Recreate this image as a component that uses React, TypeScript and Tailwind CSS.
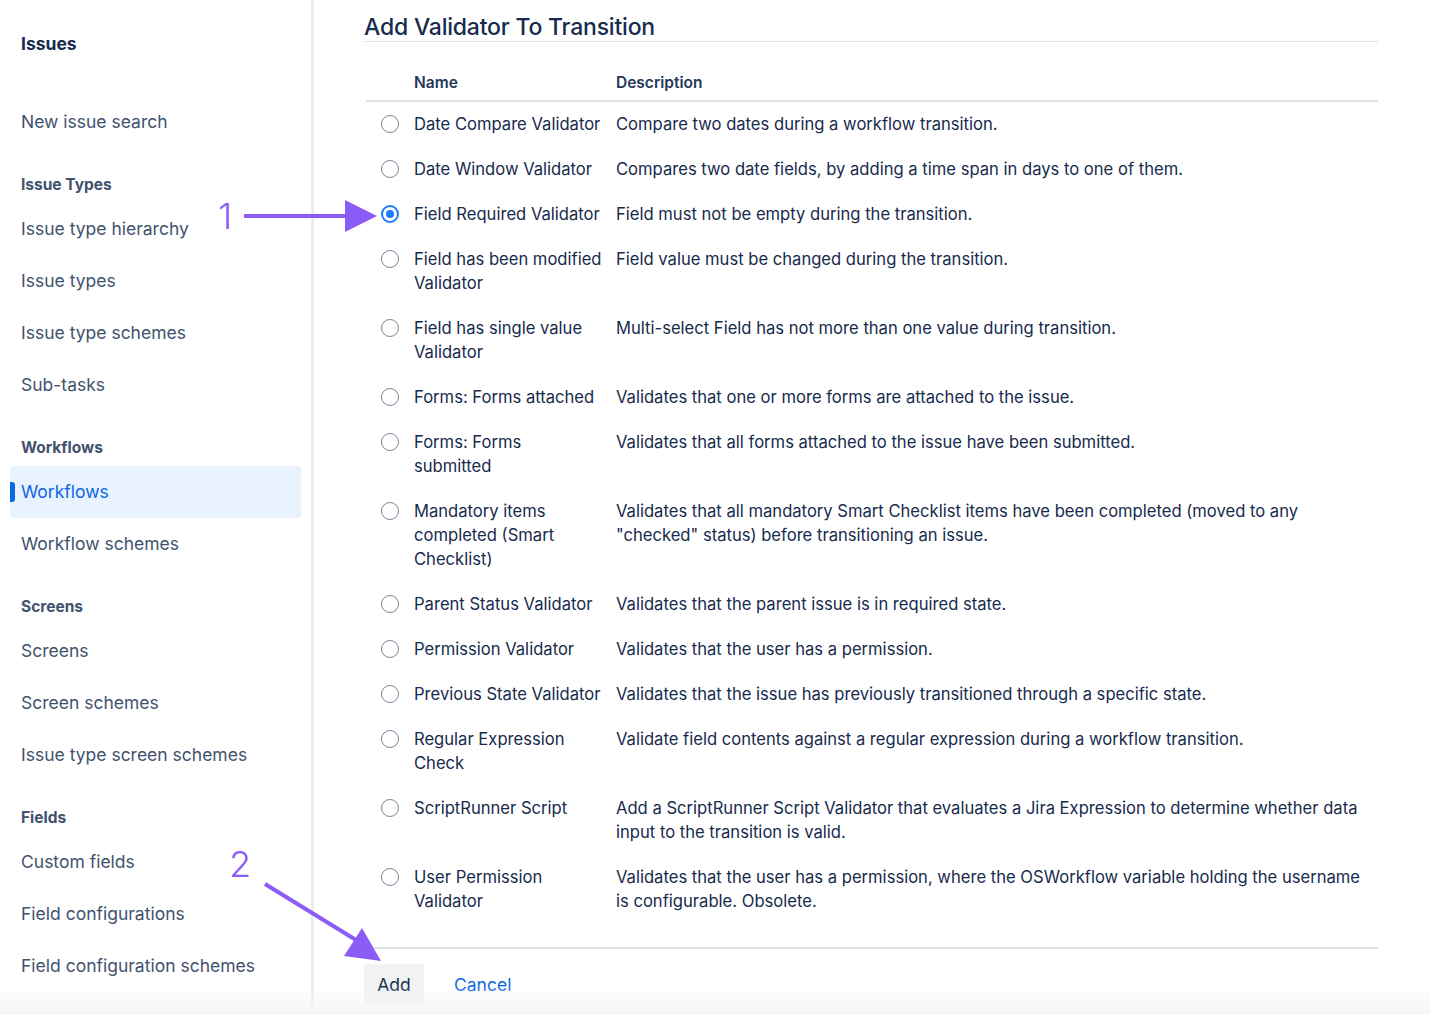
import { Fragment } from "react";

const FONT = "font-['Inter','Noto_Sans',sans-serif]";

type NavItem = { label: string; active?: boolean };
type NavGroup = { title: string; items: NavItem[] };

const NAV: NavGroup[] = [
  {
    title: "Issue Types",
    items: [
      { label: "Issue type hierarchy" },
      { label: "Issue types" },
      { label: "Issue type schemes" },
      { label: "Sub-tasks" },
    ],
  },
  {
    title: "Workflows",
    items: [{ label: "Workflows", active: true }, { label: "Workflow schemes" }],
  },
  {
    title: "Screens",
    items: [
      { label: "Screens" },
      { label: "Screen schemes" },
      { label: "Issue type screen schemes" },
    ],
  },
  {
    title: "Fields",
    items: [
      { label: "Custom fields" },
      { label: "Field configurations" },
      { label: "Field configuration schemes" },
    ],
  },
];

type Validator = { name: string[]; desc: string[]; checked?: boolean };

const VALIDATORS: Validator[] = [
  { name: ["Date Compare Validator"], desc: ["Compare two dates during a workflow transition."] },
  {
    name: ["Date Window Validator"],
    desc: ["Compares two date fields, by adding a time span in days to one of them."],
  },
  {
    name: ["Field Required Validator"],
    desc: ["Field must not be empty during the transition."],
    checked: true,
  },
  {
    name: ["Field has been modified", "Validator"],
    desc: ["Field value must be changed during the transition."],
  },
  {
    name: ["Field has single value", "Validator"],
    desc: ["Multi-select Field has not more than one value during transition."],
  },
  {
    name: ["Forms: Forms attached"],
    desc: ["Validates that one or more forms are attached to the issue."],
  },
  {
    name: ["Forms: Forms", "submitted"],
    desc: ["Validates that all forms attached to the issue have been submitted."],
  },
  {
    name: ["Mandatory items", "completed (Smart", "Checklist)"],
    desc: [
      "Validates that all mandatory Smart Checklist items have been completed (moved to any",
      "\"checked\" status) before transitioning an issue.",
    ],
  },
  {
    name: ["Parent Status Validator"],
    desc: ["Validates that the parent issue is in required state."],
  },
  { name: ["Permission Validator"], desc: ["Validates that the user has a permission."] },
  {
    name: ["Previous State Validator"],
    desc: ["Validates that the issue has previously transitioned through a specific state."],
  },
  {
    name: ["Regular Expression", "Check"],
    desc: ["Validate field contents against a regular expression during a workflow transition."],
  },
  {
    name: ["ScriptRunner Script"],
    desc: [
      "Add a ScriptRunner Script Validator that evaluates a Jira Expression to determine whether data",
      "input to the transition is valid.",
    ],
  },
  {
    name: ["User Permission", "Validator"],
    desc: [
      "Validates that the user has a permission, where the OSWorkflow variable holding the username",
      "is configurable. Obsolete.",
    ],
  },
];

function Lines({ lines }: { lines: string[] }) {
  return (
    <>
      {lines.map((l, i) => (
        <Fragment key={i}>
          {i > 0 && <br />}
          {l}
        </Fragment>
      ))}
    </>
  );
}

function Radio({ checked }: { checked?: boolean }) {
  if (checked) {
    return (
      <span className="mt-[3px] flex size-[18px] items-center justify-center rounded-full border-2 border-[#1d7afc] bg-white">
        <span className="size-[8px] rounded-full bg-[#1d7afc]" />
      </span>
    );
  }
  return <span className="mt-[3px] block size-[18px] rounded-full border-[1.5px] border-[#7a8699] bg-white" />;
}

function Sidebar() {
  return (
    <aside className="w-[314px] shrink-0 border-r-[3px] border-[#ebecf0] px-[10px]">
      <div className="mt-[32px] pl-[11px] text-[17.5px] leading-[24px] font-bold text-[#172b4d]">Issues</div>
      <div className="mt-[40px] flex h-[52px] items-center pl-[11px] text-[17.5px] text-[#42526e]">
        New issue search
      </div>
      {NAV.map((group) => (
        <div key={group.title}>
          <div className="mt-[28px] mb-[9px] pl-[11px] text-[15.5px] leading-[18px] font-bold text-[#42526e]">
            {group.title}
          </div>
          {group.items.map((item) => (
            <div
              key={item.label}
              className={
                item.active
                  ? "relative flex h-[52px] items-center rounded-[4px] bg-[#e9f2ff] pl-[11px] text-[17.5px] text-[#0c66e4]"
                  : "flex h-[52px] items-center pl-[11px] text-[17.5px] text-[#42526e]"
              }
            >
              {item.active && (
                <span className="absolute top-[16px] left-0 h-[20px] w-[5px] rounded-r-[3px] bg-[#0c66e4]" />
              )}
              {item.label}
            </div>
          ))}
        </div>
      ))}
    </aside>
  );
}

function Annotations() {
  return (
    <div className="pointer-events-none absolute inset-0">
      <span className="absolute top-[196px] left-[218px] text-[36px] leading-[40px] font-light text-[#8b5cf6]">1</span>
      <span className="absolute top-[844px] left-[229px] text-[36px] leading-[40px] font-light text-[#8b5cf6]">2</span>
      <svg className="absolute inset-0" width="1430" height="1014" viewBox="0 0 1430 1014">
        <line x1="244" y1="216" x2="350" y2="216" stroke="#8b5cf6" strokeWidth="4" />
        <polygon points="345,200 377,216 345,232" fill="#8b5cf6" />
        <line x1="265" y1="884" x2="356" y2="940" stroke="#8b5cf6" strokeWidth="4" />
        <polygon points="362,928 381,961 344,956" fill="#8b5cf6" />
      </svg>
    </div>
  );
}

export default function App() {
  return (
    <div className={`relative flex h-[1014px] w-[1430px] overflow-hidden bg-white ${FONT}`}>
      <Sidebar />
      <main className="flex-1 pr-[52px] pl-[50px]">
        <h1 className="mt-[13px] border-b border-[#dfe1e6] text-[23px] leading-[28px] font-medium tracking-[-0.2px] text-[#172b4d]">
          Add Validator To Transition
        </h1>
        <table className="ml-[2px] w-[1012px] border-collapse text-[16.6px] leading-[24px] text-[#172b4d]">
          <thead>
            <tr className="border-b-2 border-[#dfe1e6]">
              <th className="w-[48px] pt-[31px] pb-[7px]" />
              <th className="w-[202px] pt-[31px] pb-[7px] text-left text-[15.5px] leading-[20px] font-semibold text-[#253858]">
                Name
              </th>
              <th className="pt-[31px] pb-[7px] text-left text-[15.5px] leading-[20px] font-semibold text-[#253858]">
                Description
              </th>
            </tr>
          </thead>
          <tbody>
            {VALIDATORS.map((v) => (
              <tr key={v.name.join(" ")}>
                <td className="pt-[10px] pb-[11px] pl-[15px] align-top">
                  <Radio checked={v.checked} />
                </td>
                <td className="pt-[10px] pb-[11px] align-top whitespace-nowrap">
                  <Lines lines={v.name} />
                </td>
                <td className="pt-[10px] pb-[11px] align-top whitespace-nowrap">
                  <Lines lines={v.desc} />
                </td>
              </tr>
            ))}
          </tbody>
        </table>
        <div className="mt-[23px] border-t-2 border-[#dfe1e6] pt-[15px]">
          <div className="flex items-center gap-[30px]">
            <button className="h-[42px] w-[60px] rounded-[3px] bg-[#f1f2f4] text-[17.5px] text-[#172b4d]">Add</button>
            <span className="text-[17.5px] text-[#0c66e4]">Cancel</span>
          </div>
        </div>
      </main>
      <div className="pointer-events-none absolute inset-x-0 bottom-0 h-[28px] bg-gradient-to-b from-transparent to-[#f4f5f7]" />
      <Annotations />
    </div>
  );
}
